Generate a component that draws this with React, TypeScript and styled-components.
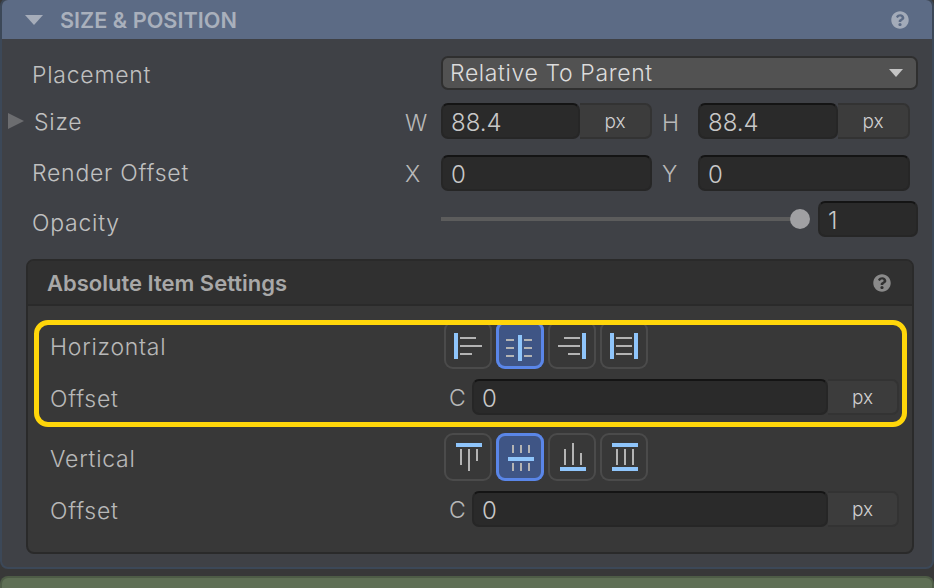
import React from 'react';
import styled, { createGlobalStyle } from 'styled-components';
import { FaQuestionCircle } from 'react-icons/fa';

const GlobalStyle = createGlobalStyle`
  html, body {
    margin: 0;
    background: #383838;
    font-family: Inter, "Liberation Sans", sans-serif;
  }
`;

type Bar = { x: number; y: number; w: number; h: number };

type AlignIcon = {
  name: string;
  active?: boolean;
  blue: Bar[];
  gray: Bar[];
};

const horizontalIcons: AlignIcon[] = [
  {
    name: 'left',
    blue: [{ x: 10, y: 12, w: 4, h: 26 }],
    gray: [
      { x: 16, y: 16, w: 16, h: 2 },
      { x: 16, y: 24, w: 22, h: 2 },
      { x: 16, y: 32, w: 12, h: 2 },
    ],
  },
  {
    name: 'center',
    active: true,
    blue: [{ x: 22, y: 14, w: 4, h: 26 }],
    gray: [
      { x: 10, y: 18, w: 8, h: 2 },
      { x: 28, y: 18, w: 8, h: 2 },
      { x: 10, y: 26, w: 8, h: 2 },
      { x: 28, y: 26, w: 8, h: 2 },
      { x: 10, y: 34, w: 8, h: 2 },
      { x: 28, y: 34, w: 8, h: 2 },
    ],
  },
  {
    name: 'right',
    blue: [{ x: 34, y: 12, w: 4, h: 26 }],
    gray: [
      { x: 16, y: 16, w: 16, h: 2 },
      { x: 10, y: 24, w: 22, h: 2 },
      { x: 20, y: 32, w: 12, h: 2 },
    ],
  },
  {
    name: 'stretch',
    blue: [
      { x: 10, y: 12, w: 4, h: 26 },
      { x: 34, y: 12, w: 4, h: 26 },
    ],
    gray: [
      { x: 16, y: 16, w: 16, h: 2 },
      { x: 16, y: 24, w: 16, h: 2 },
      { x: 16, y: 32, w: 16, h: 2 },
    ],
  },
];

const verticalIcons: AlignIcon[] = [
  {
    name: 'top',
    blue: [{ x: 12, y: 10, w: 26, h: 4 }],
    gray: [
      { x: 16, y: 16, w: 2, h: 16 },
      { x: 24, y: 16, w: 2, h: 22 },
      { x: 32, y: 16, w: 2, h: 12 },
    ],
  },
  {
    name: 'middle',
    active: true,
    blue: [{ x: 12, y: 24, w: 26, h: 4 }],
    gray: [
      { x: 16, y: 12, w: 2, h: 8 },
      { x: 24, y: 12, w: 2, h: 8 },
      { x: 32, y: 12, w: 2, h: 8 },
      { x: 16, y: 30, w: 2, h: 8 },
      { x: 24, y: 30, w: 2, h: 8 },
      { x: 32, y: 30, w: 2, h: 8 },
    ],
  },
  {
    name: 'bottom',
    blue: [{ x: 12, y: 34, w: 26, h: 4 }],
    gray: [
      { x: 16, y: 16, w: 2, h: 16 },
      { x: 24, y: 10, w: 2, h: 22 },
      { x: 32, y: 20, w: 2, h: 12 },
    ],
  },
  {
    name: 'fill',
    blue: [
      { x: 12, y: 10, w: 26, h: 4 },
      { x: 12, y: 34, w: 26, h: 4 },
    ],
    gray: [
      { x: 16, y: 16, w: 2, h: 16 },
      { x: 24, y: 16, w: 2, h: 16 },
      { x: 32, y: 16, w: 2, h: 16 },
    ],
  },
];

function AlignButtons({ icons }: { icons: AlignIcon[] }) {
  return (
    <ButtonGroup>
      {icons.map((icon) => (
        <AlignButton key={icon.name} $active={icon.active}>
          <svg width="48" height="48" viewBox="0 0 48 48">
            {icon.gray.map((b, i) => (
              <rect key={i} x={b.x} y={b.y} width={b.w} height={b.h} fill="#b4b4b4" />
            ))}
            {icon.blue.map((b, i) => (
              <rect key={i} x={b.x} y={b.y} width={b.w} height={b.h} fill="#8fc5fb" />
            ))}
          </svg>
        </AlignButton>
      ))}
    </ButtonGroup>
  );
}

function OffsetRow({ gap }: { gap: number }) {
  return (
    <CardRow $top={gap}>
      <CardLabel>Offset</CardLabel>
      <OffsetAxis>C</OffsetAxis>
      <Input $width={356} $joined>0</Input>
      <Unit $width={71}>px</Unit>
    </CardRow>
  );
}

export default function App() {
  return (
    <Page>
      <GlobalStyle />
      <Panel>
        <PanelHeader>
          <Caret />
          <PanelTitle>SIZE &amp; POSITION</PanelTitle>
          <HelpIcon $color="#a3abb9"><FaQuestionCircle size={18} /></HelpIcon>
        </PanelHeader>
        <PanelBody>
          <Row $top={0} $height={34}>
            <Label $width={408} $drop={2}>Placement</Label>
            <Select>
              Relative To Parent
              <SelectCaret />
            </Select>
          </Row>
          <Row $top={13} $arrow>
            <RowArrow />
            <Label $width={371} $drop={1}>Size</Label>
            <Axis $drop={2}>W</Axis>
            <Input $width={139} $joined>88.4</Input>
            <Unit $width={72}>px</Unit>
            <Axis $left={11} $drop={2}>H</Axis>
            <Input $width={140} $joined>88.4</Input>
            <Unit $width={72}>px</Unit>
          </Row>
          <Row $top={16}>
            <Label $width={373}>Render Offset</Label>
            <Axis $drop={1}>X</Axis>
            <Input $width={211}>0</Input>
            <Axis $left={11} $drop={1}>Y</Axis>
            <Input $width={212}>0</Input>
          </Row>
          <Row $top={10}>
            <Label $width={408} $drop={4}>Opacity</Label>
            <Slider>
              <SliderThumb />
            </Slider>
            <Input $width={100}>1</Input>
          </Row>
          <Card>
            <CardHeader>
              <CardTitle>Absolute Item Settings</CardTitle>
              <HelpIcon $color="#8a8a8a"><FaQuestionCircle size={18} /></HelpIcon>
            </CardHeader>
            <CardContent>
              <HighlightGroup>
                <HighlightRing />
                <CardRow $top={0}>
                  <CardLabel>Horizontal</CardLabel>
                  <AlignButtons icons={horizontalIcons} />
                </CardRow>
                <OffsetRow gap={10} />
              </HighlightGroup>
              <CardRow $top={18}>
                <CardLabel>Vertical</CardLabel>
                <AlignButtons icons={verticalIcons} />
              </CardRow>
              <OffsetRow gap={10} />
            </CardContent>
          </Card>
        </PanelBody>
      </Panel>
      <NextPanel />
    </Page>
  );
}

const Page = styled.div`
  height: 588px;
  overflow: hidden;
  display: flex;
  flex-direction: column;
  gap: 7px;
`;

const Panel = styled.section`
  margin-top: -2px;
  flex: none;
  border-radius: 8px;
  border: 2px solid #3c4858;
  background: #3f4146;
  overflow: hidden;
`;

const PanelHeader = styled.div`
  height: 39px;
  background: #5c6b85;
  display: flex;
  align-items: center;
  padding: 0 23px;
`;

const Caret = styled.span`
  width: 0;
  height: 0;
  border-left: 9px solid transparent;
  border-right: 9px solid transparent;
  border-top: 10px solid #a6adba;
  margin-right: 17px;
`;

const PanelTitle = styled.h2`
  flex: 1;
  margin: 0;
  font-size: 21.7px;
  font-weight: 600;
  color: #a9b0bc;
`;

const HelpIcon = styled.span<{ $color: string }>`
  display: flex;
  color: ${(p) => p.$color};
`;

const PanelBody = styled.div`
  padding: 17px 0 13px;
`;

const Row = styled.div<{ $top: number; $height?: number; $arrow?: boolean }>`
  display: flex;
  align-items: center;
  height: ${(p) => p.$height ?? 36}px;
  margin-top: ${(p) => p.$top}px;
  padding-left: ${(p) => (p.$arrow ? 6 : 30)}px;
`;

const RowArrow = styled.span`
  width: 0;
  height: 0;
  border-top: 8px solid transparent;
  border-bottom: 8px solid transparent;
  border-left: 16px solid #6c6d70;
  margin-right: 10px;
`;

const Label = styled.span<{ $width: number; $drop?: number }>`
  width: ${(p) => p.$width + 1}px;
  flex: none;
  margin-top: ${(p) => (p.$drop ?? 0) * 2}px;
  font-size: 23px;
  font-weight: 300;
  letter-spacing: 0.75px;
  color: #c0c0c0;
`;

const Axis = styled.span<{ $left?: number; $drop?: number }>`
  width: 36px;
  flex: none;
  margin-left: ${(p) => (p.$left ?? 0) - 1}px;
  margin-top: ${(p) => (p.$drop ?? 0) * 2}px;
  font-size: 23px;
  font-weight: 300;
  color: #b8b8b8;
`;

const Select = styled.div`
  position: relative;
  box-sizing: border-box;
  width: 477px;
  height: 34px;
  display: flex;
  align-items: center;
  padding-left: 7px;
  background: #525252;
  border: 2px solid #2f2f2f;
  border-radius: 7px;
  font-size: 23px;
  font-weight: 300;
  letter-spacing: 0.62px;
  color: #dcdcdc;
`;

const SelectCaret = styled.span`
  position: absolute;
  right: 13px;
  top: 11px;
  width: 0;
  height: 0;
  border-left: 7px solid transparent;
  border-right: 7px solid transparent;
  border-top: 8px solid #c4c4c4;
`;

const Input = styled.div<{ $width: number; $joined?: boolean }>`
  box-sizing: border-box;
  width: ${(p) => p.$width}px;
  height: 36px;
  flex: none;
  display: flex;
  align-items: center;
  padding: 2px 0 0 8px;
  background: #2a2a2a;
  border: 2px solid #262626;
  border-top-color: #141414;
  border-radius: 7px;
  font-size: 24px;
  font-weight: 300;
  color: #c8c8c8;
`;

const Unit = styled.div<{ $width: number }>`
  box-sizing: border-box;
  width: ${(p) => p.$width}px;
  height: 36px;
  flex: none;
  display: flex;
  align-items: center;
  justify-content: center;
  background: #3c3c3c;
  border: 2px solid #333333;
  border-left: none;
  border-radius: 0 7px 7px 0;
  font-size: 19px;
  font-weight: 300;
  color: #d0d0d0;
`;

const Slider = styled.div`
  position: relative;
  width: 359px;
  height: 4px;
  margin-right: 18px;
  background: #5c5c5c;
`;

const SliderThumb = styled.span`
  position: absolute;
  right: -10px;
  top: -8px;
  width: 20px;
  height: 20px;
  border-radius: 50%;
  background: #a0a0a3;
`;

const Card = styled.div`
  width: 888px;
  box-sizing: border-box;
  margin: 22px 0 0 24px;
  background: #383838;
  border: 2px solid #2a2a2a;
  border-radius: 8px;
  overflow: hidden;
`;

const CardHeader = styled.div`
  height: 45px;
  box-sizing: border-box;
  display: flex;
  align-items: center;
  padding: 0 21px 0 19px;
  background: #303030;
  border-bottom: 2px solid #2a2a2a;
`;

const CardTitle = styled.h3`
  flex: 1;
  margin: 1px 0 0;
  font-size: 22px;
  font-weight: 600;
  color: #a8a8a8;
`;

const CardContent = styled.div`
  padding: 15px 0 25px;
`;

const HighlightGroup = styled.div`
  position: relative;
`;

const HighlightRing = styled.div`
  position: absolute;
  z-index: 1;
  left: 6px;
  right: 5px;
  top: -1px;
  bottom: -12px;
  border: 5px solid #ffd60a;
  border-radius: 14px;
  pointer-events: none;
`;

const CardRow = styled.div<{ $top: number }>`
  display: flex;
  align-items: center;
  margin-top: ${(p) => p.$top}px;
  padding-left: 22px;
`;

const CardLabel = styled.span`
  width: 394px;
  flex: none;
  margin-top: 4px;
  font-size: 23px;
  font-weight: 300;
  letter-spacing: 0.75px;
  color: #b8b8b8;
`;

const OffsetAxis = styled.span`
  width: 22px;
  flex: none;
  margin-left: 5px;
  margin-right: 1px;
  margin-top: 2px;
  font-size: 23px;
  font-weight: 300;
  color: #b8b8b8;
`;

const ButtonGroup = styled.div`
  display: flex;
  gap: 4px;
`;

const AlignButton = styled.button<{ $active?: boolean }>`
  box-sizing: border-box;
  width: 48px;
  height: 48px;
  padding: 0;
  position: relative;
  background: ${(p) => (p.$active ? '#3f5585' : 'transparent')};
  border: none;
  border-radius: 9px;
  box-shadow: inset 0 0 0 ${(p) => (p.$active ? '3px #5a86e8' : '2px #4b4b4b')};

  svg {
    display: block;
  }
`;

const NextPanel = styled.div`
  flex: 1;
  background: #5f6f55;
  border: 2px solid #4e5c46;
  border-bottom: none;
  border-radius: 8px 8px 0 0;
`;
